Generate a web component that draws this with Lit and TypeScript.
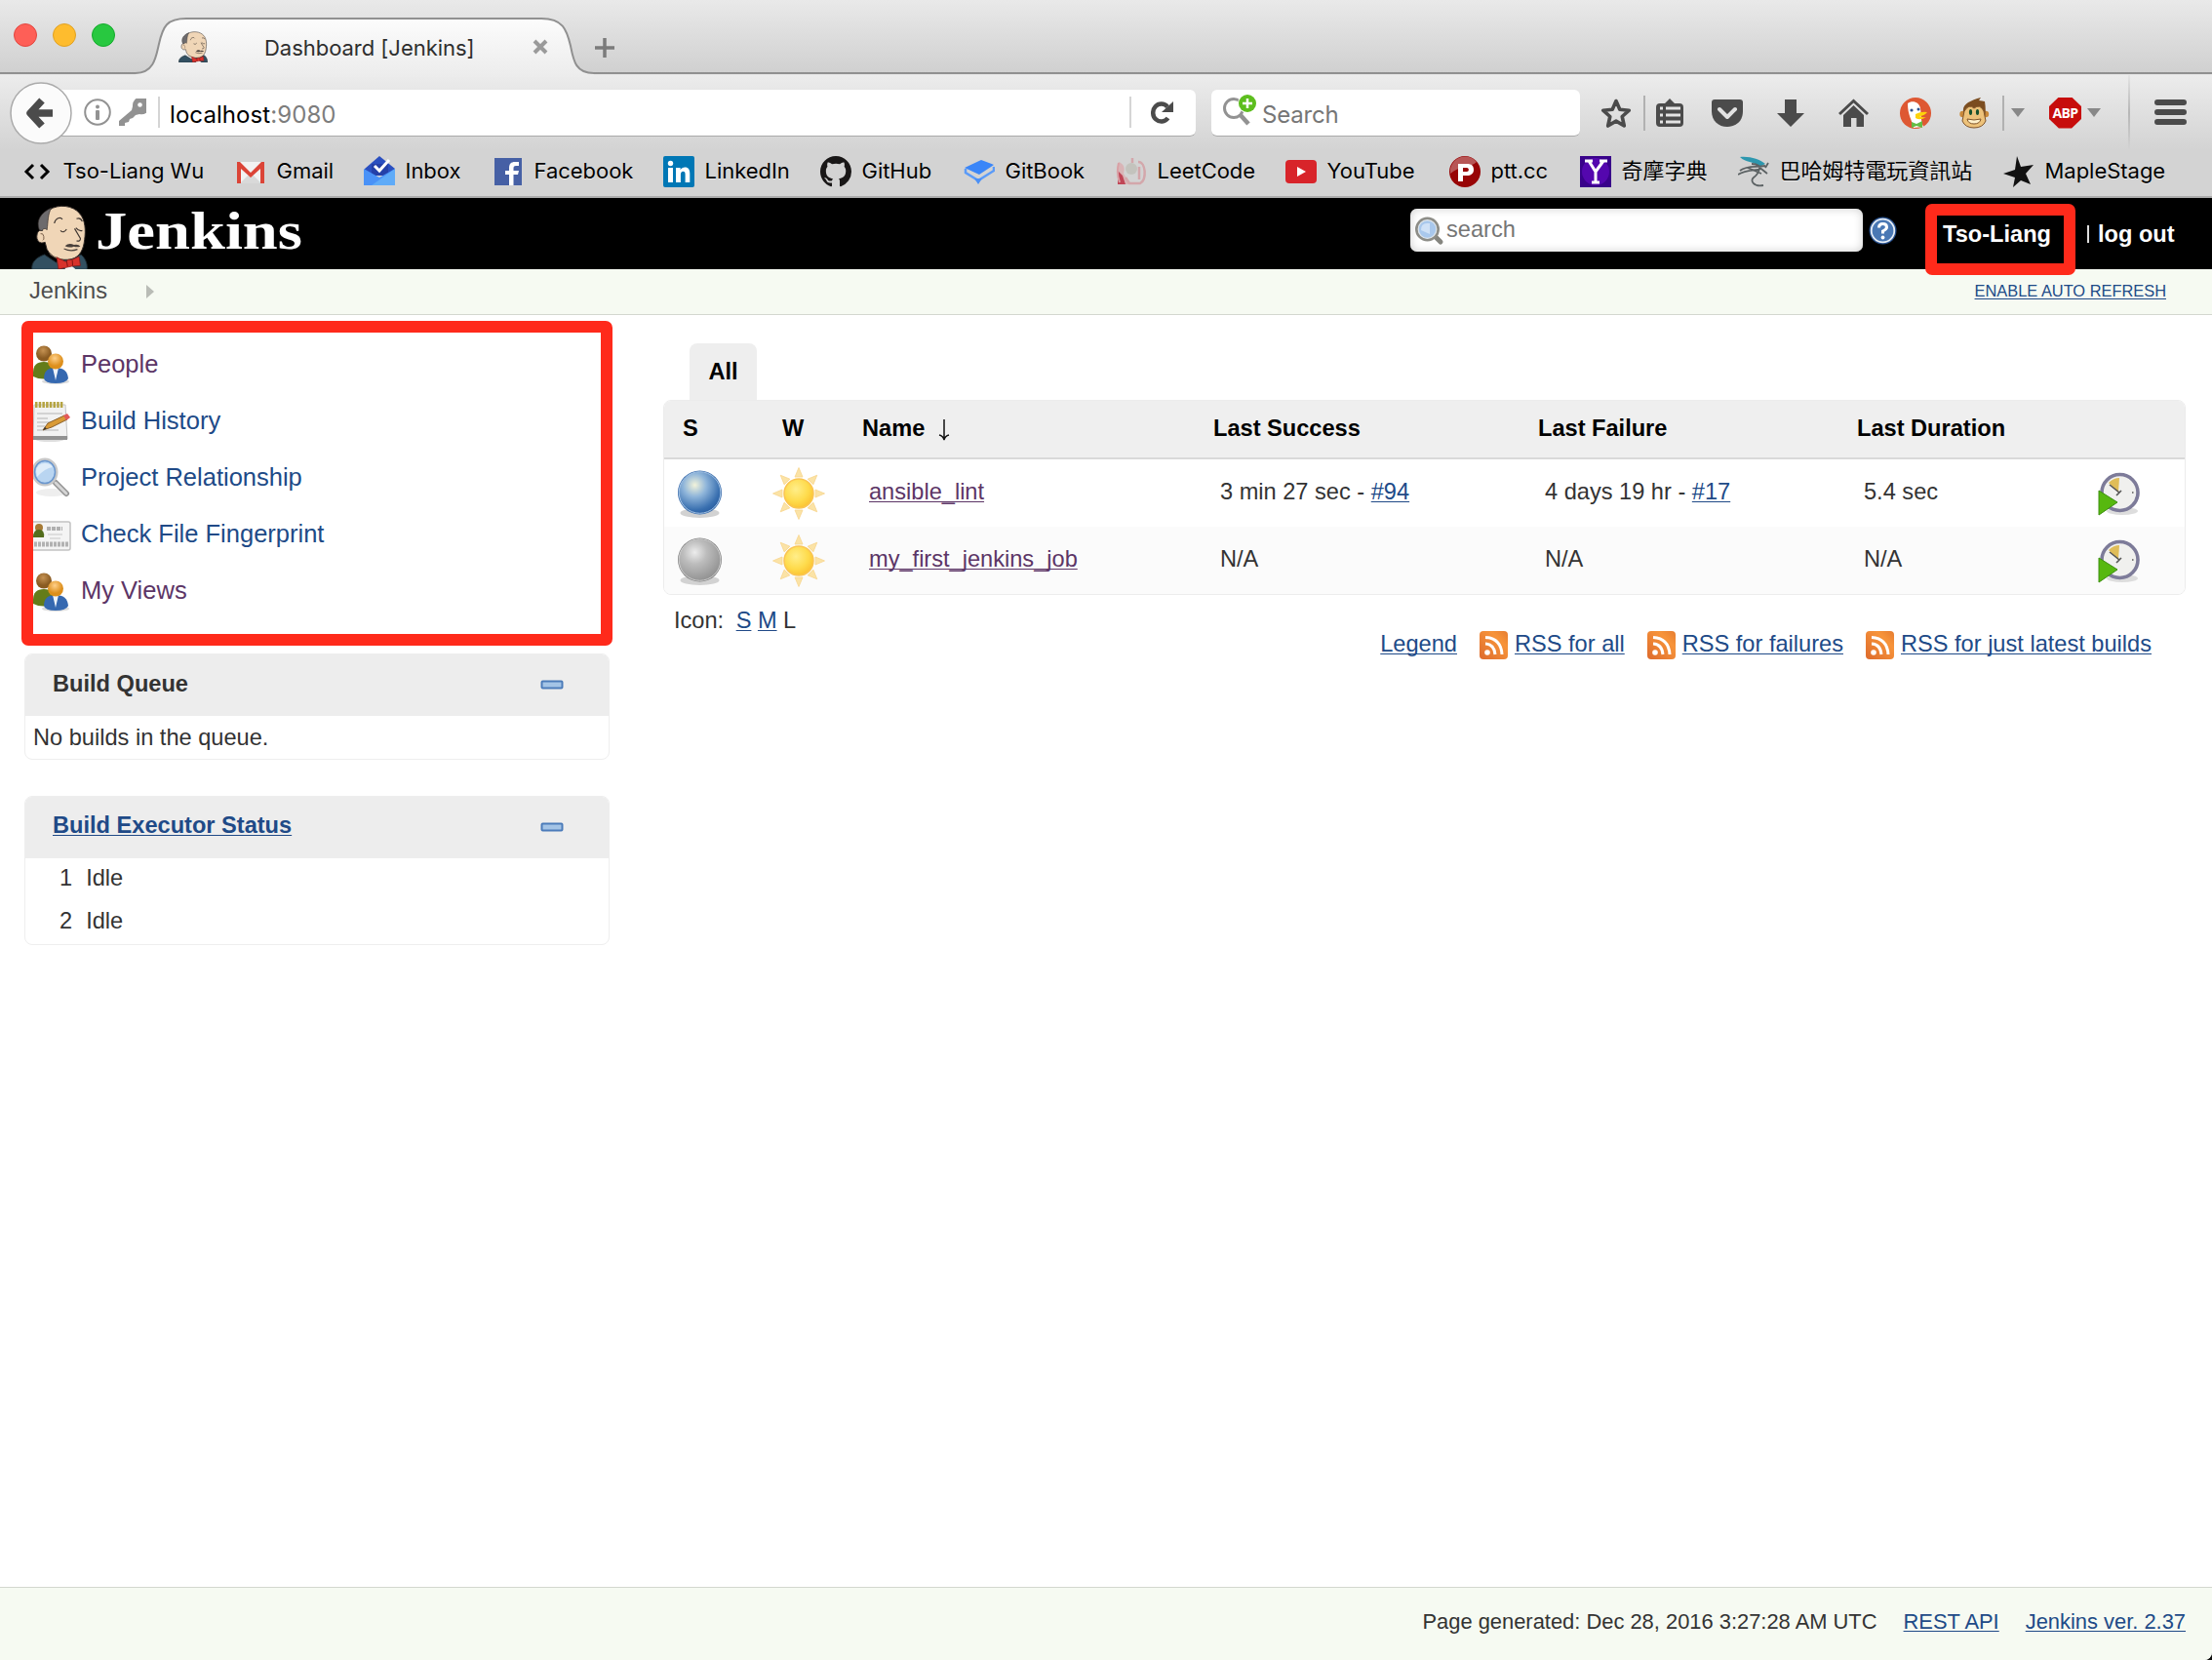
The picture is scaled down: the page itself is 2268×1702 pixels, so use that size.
import { LitElement, html, svg, css, TemplateResult } from "lit";
import { customElement } from "lit/decorators.js";

const mascot = (cls: string) => html`<svg class=${cls} viewBox="35 45 176 198" preserveAspectRatio="none">
  <path d="M37 244C36 222 48 208 76 198L112 222L190 198C206 212 210 228 209 244Z" fill="#335061" stroke="#1d2b33" stroke-width="3"/>
  <path d="M92 60C120 42 165 46 186 72C204 92 205 125 201 152C198 180 188 205 160 212C130 219 98 208 84 182L78 160C60 168 50 152 53 138C55 126 60 122 70 124C56 100 66 72 92 60Z" fill="#f0d6b7" stroke="#2f2825" stroke-width="3"/>
  <path d="M60 122C50 95 62 70 98 54C86 74 88 96 84 122C80 116 72 118 68 125Z" fill="#6d6b6d" stroke="#2f2825" stroke-width="2"/>
  <path d="M64 134q8-3 10 8t-3 12" fill="none" stroke="#7a5f4a" stroke-width="3"/>
  <path d="M107 102C110 86 126 80 132 90M176 88q12-5 18 8M126 124q10 10 19-4M174 116q9 11 20 8M170 118L188 148q1 10-12 8" fill="none" stroke="#3f3631" stroke-width="3.500"/>
  <path d="M140 172q12-12 28-4q14-3 20 5q-12 3-20 0q-14 6-28-1Z" fill="#4a413b"/>
  <path d="M137 180q20 10 42 2" fill="none" stroke="#4a413b" stroke-width="3.500"/>
  <path d="M92 196Q118 214 134 214" fill="none" stroke="#8a7460" stroke-width="3"/>
  <path d="M138 236L155 228L174 244H142Z" fill="#f4f4f4"/>
  <path d="M114 206L142 220L150 214H162L184 204L188 232L162 234L152 236L120 243Z" fill="#d8322c" stroke="#7e1512" stroke-width="2"/>
  <path d="M145 217L148 234M163 216L164 232" stroke="#7e1512" stroke-width="3"/>
</svg>`;

const bookmarkIcons: Record<string, TemplateResult> = {
  code: svg`<path d="M12 9L5 16L12 23M20 9L27 16L20 23" fill="none" stroke="#000" stroke-width="3"/>`,
  gmail: svg`<rect x="2" y="6" width="28" height="22" fill="#f2f2f2"/><path d="M5 28L16 17L27 28Z" fill="#d9d9d9"/><path d="M2 28V6H5L16 17L27 6H30V28H26V13L16 22L6 13V28Z" fill="#db4437"/>`,
  inbox: svg`<path d="M1 13L16 0L32 13V20H1Z" fill="#2a4fc0"/><path d="M8 8H25V20H8Z" fill="#2440a8"/><path d="M0 13L16 22L32 13V30H0Z" fill="#4a92f7"/><path d="M8 30L32 13V30Z" fill="#5fabf8"/><path d="M11 10L16 15L26 4" fill="none" stroke="#fff" stroke-width="3"/>`,
  facebook: svg`<rect x="2" y="2" width="28" height="28" fill="#4660a5"/><path d="M17 30V19H13V15H17V12C17 8 19 6 23 6H27V10H24C22 10 21.500 11 21.500 12.500V15H27L26 19H21.500V30Z" fill="#fff"/>`,
  linkedin: svg`<rect width="32" height="32" rx="2" fill="#0077b5"/><circle cx="7.500" cy="7.500" r="2.700" fill="#fff"/><path d="M5 12H10V27H5ZM13 12H17.600V14.200C18.600 12.500 20.300 11.600 22.200 11.600C26 11.600 27.300 14.200 27.300 18V27H22.600V19C22.600 17 22 15.800 20.400 15.800C18.600 15.800 17.900 17.200 17.900 19V27H13Z" fill="#fff"/>`,
  github: svg`<path fill="#191717" transform="scale(2)" d="M8 0C3.580 0 0 3.580 0 8c0 3.540 2.290 6.530 5.470 7.590.4.070.550-.170.550-.380 0-.190-.010-.820-.010-1.490-2.010.370-2.530-.490-2.690-.940-.090-.230-.480-.940-.820-1.130-.280-.150-.680-.520-.010-.530.630-.010 1.080.580 1.230.820.720 1.210 1.870.870 2.330.660.070-.520.280-.870.510-1.070-1.780-.2-3.640-.890-3.640-3.950 0-.870.310-1.590.820-2.150-.080-.2-.360-1.020.080-2.120 0 0 .670-.210 2.200.820.640-.180 1.320-.270 2-.270s1.360.090 2 .270c1.530-1.040 2.200-.820 2.200-.820.440 1.100.160 1.920.080 2.120.510.560.820 1.270.820 2.150 0 3.070-1.870 3.750-3.650 3.950.290.250.540.730.540 1.480 0 1.070-.010 1.930-.010 2.200 0 .210.150.460.550.380A8.010 8.010 0 0 0 16 8c0-4.420-3.580-8-8-8"/>`,
  gitbook: svg`<path d="M1 12L18 4L31 9L16 19Z" fill="#3b86f8"/><path d="M2 13V17L15 25L31 15V11" fill="none" stroke="#5b9bf8" stroke-width="2.500"/><path d="M11 23H19L15 29Z" fill="#4b90f6"/>`,
  leetcode: svg`<path d="M3 6C8 8 10 12 8 18Q10 22 13 25V29H2Z" fill="#d9b4b6"/><path d="M2 15L7 20L10 29H2Z" fill="#c04556"/><path d="M3 7C1 15 2 22 4 27" stroke="#d9a0a5" stroke-width="2" fill="none"/><circle cx="16" cy="13" r="6" fill="#c3c3bd"/><path d="M17 2V7M10 22L14 28H22M23 6C31 6 32 24 25 28H22M24 11V24" fill="none" stroke="#d3a7ab" stroke-width="2.500"/>`,
  youtube: svg`<rect y="4" width="32" height="24" rx="4" fill="#d8242a"/><path d="M12 11L21 16L12 21Z" fill="#fff"/>`,
  ptt: svg`<circle cx="16" cy="16" r="16" fill="#980506"/><path d="M1 13C5-1 20-3 28 6C22 12 10 10 1 18Z" fill="#b75656"/><path fill-rule="evenodd" d="M9 26V8H18C23 8 25 10 25 14S22 20 18 20H14V26ZM14 12V16H18C20.500 16 20.500 12 18 12Z" fill="#fff"/>`,
  yahoo: svg`<rect width="32" height="32" fill="#39028a"/><circle cx="16" cy="16" r="14" fill="#5407ae"/><path d="M5 5H13M20 5H28M9 5L16 16L24 5M16 15V27M12 27H20" fill="none" stroke="#fff" stroke-width="3"/>`,
  baha: svg`<path d="M2 1C12 0 22 3 28 8L22 11C16 5 8 7 2 1Z" fill="#2d97ae"/><path d="M2 15C10 9 18 12 28 10M0 19C8 14 16 15 24 13M14 8C28 8 20 19 16 22S16 32 26 30M20 10L30 18M10 12L24 18M28 12L31 7" fill="none" stroke="#5b6163" stroke-width="1.800"/>`,
  maple: svg`<path d="M14 0L18 11L31 9L23 18L28 29L18 25L10 32L12 22L0 18L12 14Z" fill="#111"/>`,
};

const bookmarks: [string, string][] = [
  ["code", "Tso-Liang Wu"], ["gmail", "Gmail"], ["inbox", "Inbox"], ["facebook", "Facebook"],
  ["linkedin", "LinkedIn"], ["github", "GitHub"], ["gitbook", "GitBook"], ["leetcode", "LeetCode"],
  ["youtube", "YouTube"], ["ptt", "ptt.cc"], ["yahoo", "奇摩字典"], ["baha", "巴哈姆特電玩資訊站"],
  ["maple", "MapleStage"],
];

@customElement("browser-chrome")
export class BrowserChrome extends LitElement {
  static styles = css`
    :host { display: block; height: 203px; box-sizing: border-box; color: #000;
      font-family: Inter, "Noto Sans CJK TC", sans-serif; font-size: 22px; position: relative;
      background: linear-gradient(#e9e9e9 0, #d0d0d0 75px, #ececec 77px, #d3d3d3 154px, #d3d3d3 201px, #acacac 201px); }
    svg { display: block; flex: none; }
    .shape { position: absolute; left: 0; top: 0; width: 2268px; height: 80px; }
    .tabs { position: relative; display: flex; align-items: center; height: 77px; padding-left: 14px; box-sizing: border-box; }
    .lights { display: flex; gap: 16px; width: 169px; padding-bottom: 5px; }
    .light { width: 24px; height: 24px; border-radius: 50%; box-sizing: border-box; }
    .r { background: #fe5f57; border: 1px solid #e2463f; }
    .y { background: #febc2e; border: 1px solid #e0a123; }
    .g { background: #28c840; border: 1px solid #14ab2c; }
    .fav { width: 30px; height: 32px; align-self: flex-start; margin-top: 32px; }
    .title { flex: none; width: 219px; padding-left: 58px; line-height: 30px; margin-top: 21px; white-space: nowrap; letter-spacing: -0.03px; color: #2e2e2e; }
    .x { width: 16px; height: 16px; margin: 19px 0 0 56px; }
    .plus { width: 22px; height: 22px; margin: 21px 0 0 47px; }
    .nav { position: relative; display: flex; height: 77px; align-items: center; }
    .back { width: 64px; height: 64px; margin-left: 10px; z-index: 1; }
    .url { display: flex; align-items: center; width: 1182px; height: 48px; margin-left: -30px; background: #fff; box-sizing: border-box;
      border-bottom: 1px solid #a9a9a9; border-radius: 0 6px 6px 0; padding-left: 42px; font-size: 24px; }
    .info { width: 28px; height: 28px; }
    .key { width: 28px; height: 28px; margin-left: 8px; }
    .bar { width: 2px; height: 32px; background: #d5d5d5; margin-left: 12px; }
    .bar.end { margin-left: 0; }
    .addr { margin-left: 10px; width: 984px; letter-spacing: 0.08px; line-height: 32px; margin-top: 5px; }
    .port { color: #7d7d7d; }
    .reload { width: 24px; height: 24px; margin-left: 20px; }
    .search { display: flex; align-items: center; width: 378px; height: 48px; box-sizing: border-box; margin-left: 16px; padding-left: 11px;
      background: #fff; border-bottom: 1px solid #a9a9a9; border-radius: 6px; font-size: 24px; color: #767676; }
    .glass { width: 36px; height: 34px; margin-top: -4px; }
    .search span { margin-left: 5px; line-height: 32px; margin-top: 5px; letter-spacing: -0.2px; }
    .tools { display: grid; align-items: center; height: 77px; margin-left: 21px;
      grid-template-columns: 44px 12px 58px 66px 64px 63px 61px 44px 9px 39px 39px 42px 27px 33px; }
    .i32 { width: 32px; height: 32px; }
    .div { width: 2px; height: 36px; background: #b1b1b1; }
    .long { width: 2px; height: 77px; background: linear-gradient(#e4e4e4, #b6b6b6, #d3d3d3); }
    .tri { width: 14px; height: 9px; }
    .menu { width: 33px; height: 26px; margin-top: -1px; }
    .abp { display: flex; align-items: center; justify-content: center; width: 33px; height: 32px; background: #c70d0c;
      clip-path: polygon(30% 0, 70% 0, 100% 30%, 100% 70%, 70% 100%, 30% 100%, 0 70%, 0 30%);
      font: bold 14px/32px "Open Sans", sans-serif; letter-spacing: -0.6px; color: #fff; }
    .marks { display: grid; position: relative; height: 47px; align-items: center; padding: 0 0 0 22px; margin-top: -2px;
      grid-template-columns: 219px 132px 132px 175px 161px 147px 156px 174px 168px 134px 162px 272px 1fr; }
    .mark { display: flex; align-items: center; gap: 10.500px; white-space: nowrap; letter-spacing: -0.03px; text-shadow: 0 1px 0 rgba(255,255,255,.5); }
    .mark svg { width: 32px; height: 32px; }
    .mark span { line-height: 30px; margin-top: -1px; }
  `;
  render() {
    return html`
      <svg class="shape" viewBox="0 0 2268 80">
        <defs><linearGradient id="t" x1="0" y1="0" x2="0" y2="1"><stop offset="0" stop-color="#fcfcfc"/><stop offset="1" stop-color="#ececec"/></linearGradient></defs>
        <path d="M139 79V75.500C158 75 160 58 163 45C167 27 171 19 191 19H555C577 19 581 30 585 47C588 62 590 75.500 609 75.500V79Z" fill="url(#t)"/>
        <path d="M0 75H139C158 75 160 58 163 45C167 27 171 19 191 19H555C577 19 581 30 585 47C588 62 590 75 609 75H2268" fill="none" stroke="#909090" stroke-width="2"/>
      </svg>
      <div class="tabs">
        <div class="lights"><div class="light r"></div><div class="light y"></div><div class="light g"></div></div>
        ${mascot("fav")}
        <span class="title">Dashboard [Jenkins]</span>
        <svg class="x" viewBox="0 0 16 16"><path d="M2 2L14 14M14 2L2 14" stroke="#9a9a9a" stroke-width="4"/></svg>
        <svg class="plus" viewBox="0 0 22 22"><path d="M11 1V21M1 11H21" stroke="#7b7b7b" stroke-width="3.500"/></svg>
      </div>
      <div class="nav">
        <svg class="back" viewBox="0 0 64 64"><circle cx="32" cy="32" r="31" fill="#fbfbfb" stroke="#ababab" stroke-width="1.500"/><path d="M33 19L21 32L33 45M23 32H44" fill="none" stroke="#4b4b4b" stroke-width="7.500" stroke-linejoin="round"/></svg>
        <div class="url">
          <svg class="info" viewBox="0 0 28 28"><circle cx="14" cy="14" r="12.800" fill="none" stroke="#929292" stroke-width="2"/><circle cx="14" cy="8.500" r="2" fill="#929292"/><rect x="12" y="12" width="4" height="10" rx="1" fill="#929292"/></svg>
          <svg class="key" viewBox="0 0 28 28"><path d="M14 8A9 9 0 1 1 21 16L17 17L14 20L11 21L10 24L6 25V28H0V23L13 12Z" fill="#929292"/><circle cx="21.500" cy="6.500" r="2.300" fill="#fff"/></svg>
          <div class="bar"></div>
          <span class="addr">localhost<span class="port">:9080</span></span>
          <div class="bar end"></div>
          <svg class="reload" viewBox="0 0 24 24"><path d="M17.500 18A8.500 9 0 1 1 17 6.500" fill="none" stroke="#4b4b4b" stroke-width="4.500"/><path d="M23 1V12H11Z" fill="#4b4b4b"/></svg>
        </div>
        <div class="search">
          <svg class="glass" viewBox="0 0 36 34"><circle cx="12" cy="15" r="9.500" fill="none" stroke="#929292" stroke-width="3"/><path d="M18 21L27 31" stroke="#929292" stroke-width="4.500"/><circle cx="26" cy="10" r="10" fill="#fff"/><circle cx="26" cy="10" r="9" fill="#5dbe1e"/><path d="M26 5V15M21 10H31" stroke="#fff" stroke-width="2.500"/></svg>
          <span>Search</span>
        </div>
        <div class="tools">
          <svg class="i32" viewBox="0 0 32 32"><path d="M16 3.500L19.800 12.300L29.300 13.200L22.200 19.500L24.300 29L16 24.100L7.700 29L9.800 19.500L2.700 13.200L12.200 12.300Z" fill="none" stroke="#4b4b4b" stroke-width="3.600" stroke-linejoin="round"/></svg>
          <div class="div"></div>
          <svg class="i32" viewBox="-1 0 32 32"><path d="M4 6H9L14 1L19 6H24Q28 6 28 10V26Q28 30 24 30H4Q0 30 0 26V10Q0 6 4 6Z" fill="#4b4b4b"/><path d="M10 11H25M10 18H25M10 25H25" stroke="#e4e4e4" stroke-width="3"/><path d="M4 11H7M4 18H7M4 25H7" stroke="#e4e4e4" stroke-width="3"/></svg>
          <svg class="i32" viewBox="0 0 32 32"><path d="M3 2H29Q32 2 32 5V14C32 24 25 30 16 30S0 24 0 14V5Q0 2 3 2Z" fill="#4b4b4b"/><path d="M8 12L16 20L24 12" fill="none" stroke="#e2e2e2" stroke-width="4" stroke-linecap="round" stroke-linejoin="round"/></svg>
          <svg class="i32" viewBox="-1 0 32 32"><path d="M8 2H20V16H28L14 30L0 16H8Z" fill="#4b4b4b"/></svg>
          <svg class="i32" viewBox="0 0 32 32"><path d="M1 17L15.500 3.500L30 17" fill="none" stroke="#4b4b4b" stroke-width="3"/><path d="M5 18L15.500 8L26 18V30H18.500V21H13V30H5Z" fill="#4b4b4b"/></svg>
          <svg class="i32" viewBox="0 0 32 32"><circle cx="16" cy="16" r="16" fill="#de5833"/><path d="M8 6C13 2 20 5 21 11C22 18 21 22 24 30L14 31C12 22 8 18 8 6Z" fill="#fff"/><circle cx="12" cy="13" r="1.600" fill="#2d4f8e"/><circle cx="19" cy="12" r="1.500" fill="#2d4f8e"/><path d="M16 17Q22 14 28 15Q25 19 20 19Q24 21 27 20Q21 24 16 21Z" fill="#fdd20a"/><path d="M12 25L17 27L23 24V31L17 29L12 31Z" fill="#65bc46"/></svg>
          <svg class="i32" viewBox="1 0 32 32"><circle cx="4.500" cy="17" r="3.200" fill="#c9893a"/><circle cx="28" cy="17" r="3.200" fill="#c9893a"/><path d="M5 14C4 7 12 3 23 0L21 3L27 4C28 10 28 16 27 20H6Z" fill="#7b4d20"/><path d="M6 14Q11 6 16 11Q22 6 26 14L28 24Q25 31 16 31T4 24Z" fill="#edc27a" stroke="#80552a"/><ellipse cx="12.500" cy="15" rx="1.600" ry="3" fill="#16512d"/><ellipse cx="19.500" cy="15" rx="1.600" ry="3" fill="#16512d"/><path d="M9 22Q16 24 23 22Q22 27 16 27T9 22Z" fill="#fff1cb" stroke="#80552a"/></svg>
          <div class="div"></div>
          <svg class="tri" viewBox="0 0 14 9"><path d="M0 0H14L7 9Z" fill="#888"/></svg>
          <div class="abp">ABP</div>
          <svg class="tri" viewBox="0 0 14 9"><path d="M0 0H14L7 9Z" fill="#888"/></svg>
          <div class="long"></div>
          <svg class="menu" viewBox="0 0 33 26"><path d="M3 3H30M3 13H30M3 23H30" stroke="#4b4b4b" stroke-width="6" stroke-linecap="round"/></svg>
        </div>
      </div>
      <div class="marks">
        ${bookmarks.map(([icon, label]) => html`<div class="mark"><svg viewBox="0 0 32 32">${bookmarkIcons[icon]}</svg><span>${label}</span></div>`)}
      </div>`;
  }
}

const icons: Record<string, TemplateResult> = {
  people: svg`<ellipse cx="23" cy="37" rx="14" ry="3" fill="#ddd"/><path d="M0 28Q0 17 11 17T22 28V32Q10 37 0 32Z" fill="#647c19"/><circle cx="11" cy="8.500" r="8" fill="url(#br)"/><path d="M11 34Q11 23 23 23T36 34Q34 39 23 39T11 34Z" fill="#3568b0"/><path d="M20 23L23 36L26 23Z" fill="#eef3fa"/><circle cx="23" cy="16.500" r="8" fill="url(#or)"/>`,
  notepad: svg`<ellipse cx="17" cy="39" rx="14" ry="2" fill="#ddd"/><path d="M1 3H33L35 38H0Z" fill="#f2f2f2" stroke="#c4c4c4"/><path d="M0 35H35V39H0Z" fill="#929292"/><path d="M2 3H31" stroke="#b5a442" stroke-width="6" stroke-dasharray="2.500 1.200"/><path d="M4 12H30M4 17H15M4 21H20M4 25H12M4 29H26" stroke="#c9c9c9" stroke-width="1.500"/><path d="M10 29L15 22L32 14L35 18L19 26Z" fill="#d99a35" stroke="#8b602a"/><path d="M31 14L35 12L38 16L34 19Z" fill="#e25a5a"/><path d="M10 29L12 26L14 27.500Z" fill="#333"/>`,
  lens: svg`<ellipse cx="19" cy="35" rx="16" ry="4" fill="#eee"/><path d="M23 25L34 36" stroke="#929292" stroke-width="6" stroke-linecap="round"/><path d="M23 25L34 36" stroke="#d5d5d5" stroke-width="3" stroke-linecap="round"/><ellipse cx="12" cy="14" rx="12" ry="13" fill="#b9d5f1" stroke="#c9c9c9" stroke-width="3"/><ellipse cx="12" cy="14" rx="10.500" ry="11.500" fill="none" stroke="#6a96cd" stroke-width="1.500"/><path d="M3 13Q4 5 12 5Q18 5 20 9Q12 10 4 19Z" fill="#e0edf9"/>`,
  card: svg`<rect x="-2" y="6" width="40" height="29" rx="2" fill="#f4f4f4" stroke="#c2c2c2" stroke-width="1.500"/><circle cx="6" cy="12" r="4" fill="#a67a35"/><path d="M0 22Q0 14 6 14T11 22Z" fill="#536d1c"/><path d="M14 13H30" stroke="#b0b0b0" stroke-width="4" stroke-dasharray="4 1"/><path d="M15 19H30M17 23H28" stroke="#d6d6d6" stroke-width="1.500"/><path d="M1 29H36" stroke="#b2b2b2" stroke-width="5" stroke-dasharray="3 1"/>`,
};

const iconDefs = svg`<defs>
  <radialGradient id="br" cx=".45" cy=".3"><stop offset="0" stop-color="#c59252"/><stop offset="1" stop-color="#8a5b22"/></radialGradient>
  <radialGradient id="or" cx=".45" cy=".3"><stop offset="0" stop-color="#ffd08a"/><stop offset="1" stop-color="#dd8f1c"/></radialGradient>
</defs>`;

const tasks = [
  { icon: "people", label: "People", seen: true },
  { icon: "notepad", label: "Build History", seen: false },
  { icon: "lens", label: "Project Relationship", seen: false },
  { icon: "card", label: "Check File Fingerprint", seen: false },
  { icon: "people", label: "My Views", seen: true },
];

const jobs = [
  { ball: "blue", name: "ansible_lint", ok: "3 min 27 sec - ", okRef: "#94", bad: "4 days 19 hr - ", badRef: "#17", time: "5.4 sec" },
  { ball: "grey", name: "my_first_jenkins_job", ok: "N/A", okRef: "", bad: "N/A", badRef: "", time: "N/A" },
];

const ball = (kind: string) => html`<svg class="ball" viewBox="0 0 46 50">
  <defs><radialGradient id="ball-${kind}" cx=".38" cy=".32" r=".7">
    ${kind === "blue"
      ? svg`<stop offset="0" stop-color="#f2f3da"/><stop offset=".4" stop-color="#8fb5da"/><stop offset=".85" stop-color="#3a70b0"/><stop offset="1" stop-color="#2d62a5"/>`
      : svg`<stop offset="0" stop-color="#ececec"/><stop offset=".4" stop-color="#bdbdbd"/><stop offset="1" stop-color="#929292"/>`}
  </radialGradient></defs>
  <ellipse cx="22.500" cy="45" rx="20" ry="5" fill="#d2d2d2"/>
  <circle cx="22.500" cy="24" r="22.500" fill=${kind === "blue" ? "#3f70ad" : "#858585"}/>
  <circle cx="22.500" cy="24" r="21.300" fill="url(#ball-${kind})" stroke=${kind === "blue" ? "#a5c3e4" : "#cdcdcd"} stroke-width="1"/>
</svg>`;

const sun = html`<svg class="sun" viewBox="-27 -27 54 54">
  <defs><radialGradient id="s" cx=".4" cy=".35" r=".7"><stop offset="0" stop-color="#ffee8a"/><stop offset=".6" stop-color="#fedb4c"/><stop offset="1" stop-color="#fbc02f"/></radialGradient></defs>
  ${[0, 45, 90, 135, 180, 225, 270, 315].map((a) => svg`<path d="M-4-17L0-26.500L4-17Z" transform="rotate(${a})" fill="#fbe3a6" stroke="#f8d68e" stroke-width=".8"/>`)}
  <circle r="15" fill="url(#s)" stroke="#fac553" stroke-width="1.500"/>
</svg>`;

const clock = html`<svg class="clock" viewBox="0 0 42 44">
  <ellipse cx="24" cy="40" rx="16" ry="4" fill="#ddd"/>
  <circle cx="21.500" cy="21" r="18.500" fill="#f0f0ee" stroke="#7d7b99" stroke-width="3.600"/>
  <path d="M20 21L10 11Q15 6 21 6Z" fill="#e0bd58"/>
  <path d="M11 13L21 21L23 19M21 21L18 24M34 21H35.500" fill="none" stroke="#555" stroke-width="1.600"/>
  <path d="M0 19L19 31L0 44Z" fill="#57b80f" stroke="#3c8f10"/>
</svg>`;

const rss = html`<svg class="rss" viewBox="0 0 29 29">
  <defs><linearGradient id="r" x1="0" y1="1" x2="1" y2="0"><stop offset="0" stop-color="#dd6a2c"/><stop offset=".7" stop-color="#f7943a"/><stop offset="1" stop-color="#e57c30"/></linearGradient></defs>
  <rect width="29" height="29" rx="4" fill="url(#r)"/><circle cx="8" cy="22" r="2.800" fill="#fff"/>
  <path d="M6 13Q15 13.500 16 24M6 6.500Q22 7.500 23 24" fill="none" stroke="#fff" stroke-width="3"/>
</svg>`;

const minus = html`<svg class="minus" viewBox="0 0 24 10"><rect x="1.500" y="1.500" width="21" height="7" rx="1" fill="#a4c4e6" stroke="#4c7cba" stroke-width="2"/></svg>`;

@customElement("app-root")
export class AppRoot extends LitElement {
  static styles = css`
    :host { display: block; width: 2268px; height: 1702px; background: #111; overflow: hidden; }
    .window { position: relative; display: flex; flex-direction: column; height: 1702px; background: #fff; border-radius: 0 0 8px 0; overflow: hidden;
      font: 23.600px "Liberation Sans", Arial, sans-serif; color: #333; }
    svg { display: block; flex: none; overflow: visible; }
    a { color: #204a87; text-decoration: underline; text-decoration-thickness: 1px; text-underline-offset: 2px; text-decoration-skip-ink: none; }
    a.seen { color: #5c3566; }
    .header { display: flex; height: 73px; background: #000; color: #fff; font-weight: bold; }
    .logo { width: 58px; height: 66px; margin: 7px 0 0 32px; overflow: hidden; }
    .brandbox { width: 1356px; margin-top: -1px; }
    .brand { width: 1000px; margin-left: 8px; font: bold 55px/70px "Liberation Serif", serif; transform: scaleX(1.175); transform-origin: left; }
    .find { display: flex; align-items: center; box-sizing: border-box; width: 464px; height: 44px; margin-top: 11px; padding-left: 5px; border-radius: 7px;
      background: #fff; box-shadow: inset 0 0 10px #cfcfcf; color: #767676; font-weight: normal; }
    .find svg { width: 29px; height: 29px; }
    .find span { margin: -2px 0 0 3px; }
    .help { width: 29px; height: 29px; margin: 19px 0 0 6px; }
    .user { margin: 22px 0 0 47px; line-height: 30px; width: 148px; }
    .pipe { width: 2px; height: 18px; background: #ddd; margin-top: 28px; }
    .out { margin: 22px 0 0 9px; line-height: 30px; }
    .crumbs { display: flex; align-items: center; height: 47px; box-sizing: border-box; border-bottom: 1px solid #d3d7cf; background: #f6faf2; padding: 0 47px 0 30px; color: #4d4d4d; }
    .crumbs svg { width: 8px; height: 14px; margin-left: 40px; }
    .crumbs span { margin-top: -1px; }
    .crumbs a { margin: -1px 0 0 auto; font-size: 16.400px; }
    .body { display: flex; height: 1304px; align-items: flex-start; }
    .side { width: 600px; margin-left: 25px; padding-top: 21px; }
    .tasks { display: flex; flex-direction: column; height: 326px; padding-left: 9px; }
    .task { display: flex; align-items: center; height: 58.200px; gap: 9px; font-size: 25.500px; }
    .task svg { width: 40px; height: 40px; margin-top: 2px; }
    .task a { text-decoration: none; }
    .panel { box-sizing: border-box; border: 1px solid #eee; border-radius: 8px; overflow: hidden; }
    .panel + .panel { margin-top: 37px; }
    .phead { display: flex; justify-content: space-between; align-items: center; height: 63px; background: #ededed; padding: 0 46px 0 28px; font-weight: bold; box-sizing: border-box; }
    .phead > span { margin-top: -3px; }
    .phead > a { margin-top: -4px; }
    .minus { width: 24px; height: 10px; margin-top: -1px; }
    .empty { height: 44px; line-height: 44px; padding-left: 8px; }
    .execs { height: 88px; }
    .exec { display: flex; height: 44px; line-height: 41px; padding-left: 35px; gap: 14px; }
    .main { width: 1561px; margin-left: 55px; padding-top: 29px; }
    .tab { width: 69px; height: 58px; margin-left: 27px; background: #eee; border-radius: 8px 8px 0 0; color: #000; font-weight: bold; text-align: center; line-height: 59px; }
    .table { border: 1px solid #ececec; box-sizing: border-box; border-radius: 8px; overflow: hidden; }
    .row { display: grid; grid-template-columns: 111px 90px 360px 333px 327px 240px 1fr; align-items: center; height: 69px; box-sizing: border-box; }
    .row.head { height: 60px; background: #efefef; border-bottom: 2px solid #d9d9d9; font-weight: bold; color: #000; }
    .head span:nth-child(1) { padding-left: 19px; }
    .head span:nth-child(2) { padding-left: 10px; }
    .head span:nth-child(n+3) { padding-left: 2px; }
    .head span { margin-top: -1px; }
    .name { display: flex; gap: 15px; }
    .name svg { width: 10px; height: 22px; margin-top: 4px; }
    .job span { padding-left: 9px; margin-top: -2px; }
    .job.alt { background: #fbfbfb; }
    .ball { width: 46px; height: 50px; margin-left: 14px; }
    .sun { width: 54px; height: 54px; }
    .clock { width: 42px; height: 44px; margin-left: 10px; margin-top: 1px; }
    .under { display: flex; justify-content: space-between; padding: 0 35px 0 11px; }
    .sizes { display: flex; gap: 6.500px; line-height: 53px; }
    .sizes span:first-child { margin-right: 6px; }
    .feeds { display: flex; align-items: center; margin-top: 29px; height: 44px; }
    .feeds svg { width: 29px; height: 29px; margin: 0 6.500px 0 23.500px; }
    .feeds a { margin-top: -1px; }
    .footer { display: flex; justify-content: flex-end; gap: 27px; box-sizing: border-box; height: 75px; border-top: 1px solid #d3d7cf; background: #f6faf2; font-size: 21.900px; line-height: 70px; padding-right: 27px; }
    .mark { position: absolute; box-sizing: border-box; border: 12px solid #ff2a1b; border-radius: 7px; }
    .m1 { left: 22px; top: 329px; width: 606px; height: 333px; }
    .m2 { left: 1974px; top: 209px; width: 154px; height: 73px; }
  `;
  render() {
    return html`<div class="window">
      <browser-chrome></browser-chrome>
      <div class="header">
        ${mascot("logo")}
        <div class="brandbox"><div class="brand">Jenkins</div></div>
        <div class="find">
          <svg viewBox="0 0 29 29"><path d="M20 20L26 26" stroke="#85857f" stroke-width="5" stroke-linecap="round"/><circle cx="12.500" cy="13" r="11" fill="#a9c8ec" stroke="#8d8d87" stroke-width="3"/><circle cx="12.500" cy="13" r="9.300" fill="none" stroke="#e0e6ea" stroke-width="1.200"/><path d="M6 14Q6 7 12 7H15V18Z" fill="#cfe1f6"/></svg>
          <span>search</span>
        </div>
        <svg class="help" viewBox="0 0 29 29"><circle cx="14.500" cy="14.500" r="14" fill="#264f8c"/><circle cx="14.500" cy="14.500" r="11.800" fill="#4a78b4" stroke="#e6edf6" stroke-width="1.800"/><path d="M10.500 11.500Q10.500 7.500 14.500 7.500T18.500 11Q18.500 13 14.500 15V17.500" fill="none" stroke="#fff" stroke-width="3"/><circle cx="14.500" cy="21.500" r="1.900" fill="#fff"/></svg>
        <span class="user">Tso-Liang</span><div class="pipe"></div><span class="out">log out</span>
      </div>
      <div class="crumbs"><span>Jenkins</span><svg viewBox="0 0 8 14"><path d="M0 0L8 7L0 14Z" fill="#b9bcb6"/></svg><a>ENABLE AUTO REFRESH</a></div>
      <div class="body">
        <div class="side">
          <div class="tasks">${tasks.map((t) => html`<div class="task"><svg viewBox="0 0 40 40">${iconDefs}${icons[t.icon]}</svg><a class=${t.seen ? "seen" : ""}>${t.label}</a></div>`)}</div>
          <div class="panel"><div class="phead"><span>Build Queue</span>${minus}</div><div class="empty">No builds in the queue.</div></div>
          <div class="panel"><div class="phead"><a>Build Executor Status</a>${minus}</div>
            <div class="execs">${[1, 2].map((n) => html`<div class="exec"><span>${n}</span><span>Idle</span></div>`)}</div></div>
        </div>
        <div class="main">
          <div class="tab">All</div>
          <div class="table">
            <div class="row head"><span>S</span><span>W</span><span class="name">Name<svg viewBox="0 0 10 22"><path d="M5 0V20M0 16Q4 17 5 21Q6 17 10 16" fill="none" stroke="#111" stroke-width="1.500"/></svg></span><span>Last Success</span><span>Last Failure</span><span>Last Duration</span></div>
            ${jobs.map((j, i) => html`<div class="row job ${i % 2 ? "alt" : ""}">
              ${ball(j.ball)}${sun}<span><a class="seen">${j.name}</a></span>
              <span>${j.ok}${j.okRef ? html`<a>${j.okRef}</a>` : ""}</span>
              <span>${j.bad}${j.badRef ? html`<a>${j.badRef}</a>` : ""}</span>
              <span>${j.time}</span>${clock}</div>`)}
          </div>
          <div class="under">
            <div class="sizes"><span>Icon:</span><a>S</a><a>M</a><span>L</span></div>
            <div class="feeds"><a>Legend</a>${rss}<a>RSS for all</a>${rss}<a>RSS for failures</a>${rss}<a>RSS for just latest builds</a></div>
          </div>
        </div>
      </div>
      <div class="footer"><span>Page generated: Dec 28, 2016 3:27:28 AM UTC</span><a>REST API</a><a>Jenkins ver. 2.37</a></div>
      <div class="mark m1"></div><div class="mark m2"></div>
    </div>`;
  }
}
